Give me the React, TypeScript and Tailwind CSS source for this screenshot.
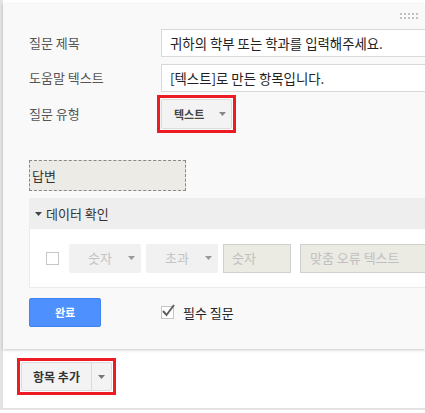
import React from "react";

const font = { fontFamily: '"Noto Sans CJK KR", "Noto Sans", sans-serif' };

function Caret({ className = "" }: { className?: string }) {
  return (
    <svg width="7" height="4" viewBox="0 0 7 4" className={className}>
      <path d="M0 0 H7 L3.5 4 Z" fill="currentColor" />
    </svg>
  );
}

function Label({ children }: { children: React.ReactNode }) {
  return <div className="w-[132px] shrink-0 text-[13px] text-[#555]">{children}</div>;
}

export default function App() {
  return (
    <div className="w-[425px] h-[413px] bg-white overflow-hidden" style={font}>
      <div className="h-[410px] border-l-[3px] border-b-[2px] border-[#e3e3e3] bg-white pt-[4px]">
        {/* question card */}
        <div className="relative h-[345px] bg-[#f9f9f9] shadow-[0_1px_3px_rgba(0,0,0,0.22)] pl-[26px] pt-[25px] overflow-hidden">
          <div className="absolute right-[7px] top-[9px] grid grid-cols-5 gap-[2px]">
            {Array.from({ length: 10 }).map((_, i) => (
              <span key={i} className="w-[2px] h-[2px] bg-[#c2c2c2]" />
            ))}
          </div>

          <div className="flex items-center h-[28px]">
            <Label>질문 제목</Label>
            <div className="w-[280px] h-[28px] shrink-0 bg-white border border-[#d9d9d9] pl-[8px] flex items-center text-[13.4px] text-[#222]">
              귀하의 학부 또는 학과를 입력해주세요.
            </div>
          </div>
          <div className="flex items-center h-[28px] mt-[7px]">
            <Label>도움말 텍스트</Label>
            <div className="w-[280px] h-[28px] shrink-0 bg-white border border-[#d9d9d9] pl-[8px] flex items-center text-[13.4px] text-[#222]">
              [텍스트]로 만든 항목입니다.
            </div>
          </div>
          <div className="flex items-center h-[30px] mt-[7px]">
            <Label>질문 유형</Label>
            <div className="-m-[4px] border-[3px] border-[#ed1c24] p-[1px]">
              <div className="w-[71px] h-[30px] flex items-center justify-between pl-[12px] pr-[5px] rounded-[2px] border border-[#dcdcdc] bg-[#f3f3f3]">
                <span className="text-[11px] font-bold text-[#444]">텍스트</span>
                <Caret className="text-[#888]" />
              </div>
            </div>
          </div>

          <div className="mt-[31px] w-[157px] h-[31px] border border-dashed border-[#888] bg-[#ecebe5] flex items-center pl-[2px] text-[13px] text-[#333]">
            답변
          </div>

          <div className="mt-[7px] w-[420px] h-[31px] bg-[#eeeeee] flex items-center pl-[6px] text-[13px] text-[#333]">
            <Caret className="text-[#444] mr-[4px]" />
            데이터 확인
          </div>
          <div className="w-[420px] h-[59px] bg-white border-l border-b border-[#ebebeb] flex items-center pl-[16px]">
            <span className="w-[13px] h-[13px] border border-[#c6c6c6] bg-white shrink-0" />
            <div className="ml-[10px] w-[72px] h-[29px] rounded-[2px] bg-[#f1f1f1] flex items-center justify-between pl-[19px] pr-[6px]">
              <span className="text-[13px] text-[#c4c4c4]">숫자</span>
              <Caret className="text-[#999]" />
            </div>
            <div className="ml-[5px] w-[72px] h-[29px] rounded-[2px] bg-[#f1f1f1] flex items-center justify-between pl-[19px] pr-[6px]">
              <span className="text-[13px] text-[#c4c4c4]">초과</span>
              <Caret className="text-[#999]" />
            </div>
            <div className="ml-[5px] w-[68px] h-[29px] bg-[#ebebe4] border border-[#d0d0d0] flex items-center pl-[8px] text-[13px] text-[#c0c0c0]">
              숫자
            </div>
            <div className="ml-[9px] w-[140px] h-[29px] shrink-0 bg-[#ebebe4] border border-[#d0d0d0] flex items-center pl-[9px] text-[13px] text-[#c0c0c0]">
              맞춤 오류 텍스트
            </div>
          </div>

          <div className="mt-[10px] flex items-center h-[29px]">
            <div className="w-[72px] h-[29px] rounded-[2px] bg-[#4d90fe] border border-[#3f84f4] flex items-center justify-center text-[11px] font-bold text-white">
              완료
            </div>
            <div className="ml-[60px] flex items-center">
              <span className="relative w-[13px] h-[13px] border border-[#c6c6c6] bg-white">
                <svg width="15" height="13" viewBox="0 0 15 13" className="absolute -left-[1px] -top-[3px]">
                  <path d="M2 7 L5.5 11 L13 1" stroke="#606060" strokeWidth="2" fill="none" />
                </svg>
              </span>
              <span className="ml-[9px] text-[13px] text-[#222]">필수 질문</span>
            </div>
          </div>
        </div>

        {/* add item */}
        <div className="pl-[14px] pt-[9px]">
          <div className="w-fit border-[3px] border-[#ed1c24] p-[1px]">
            <div className="w-[91px] h-[29px] flex rounded-[2px] border border-[#dcdcdc] bg-[#f3f3f3]">
              <div className="w-[70px] flex items-center justify-center text-[12px] font-bold text-[#333] border-r border-[#dcdcdc]">
                항목 추가
              </div>
              <div className="flex-1 flex items-center justify-center">
                <Caret className="text-[#777]" />
              </div>
            </div>
          </div>
        </div>
      </div>
    </div>
  );
}
